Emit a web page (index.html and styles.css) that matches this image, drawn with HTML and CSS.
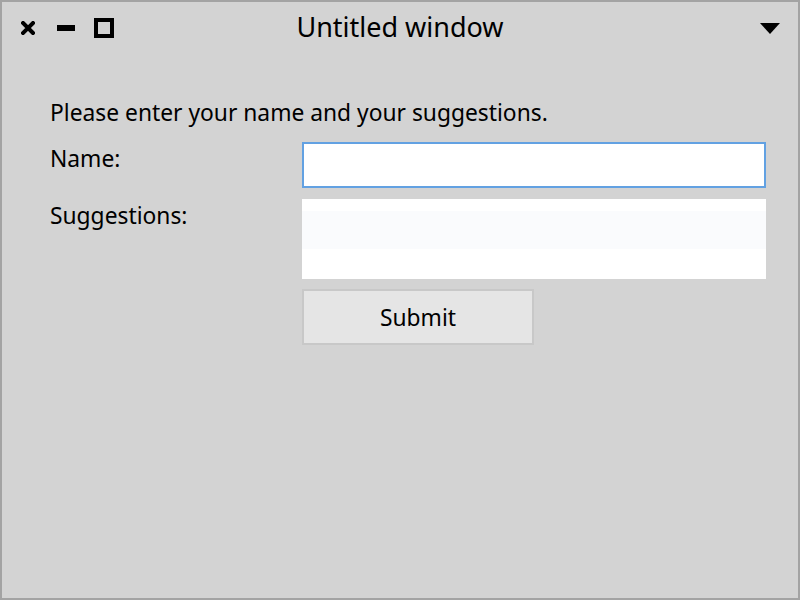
FILE: index.html
```html
<!DOCTYPE html>
<html>
<head>
<meta charset="utf-8">
<link rel="stylesheet" href="styles.css">
</head>
<body>
<div class="window">
  <div class="titlebar">
    <div class="controls">
      <svg class="ic-close" width="14" height="14" viewBox="0 0 14 14"><path d="M2 2 L12 12 M12 2 L2 12" stroke="#000" stroke-width="4" stroke-linecap="square"/></svg>
      <span class="ic-min"></span>
      <span class="ic-max"></span>
    </div>
    <div class="title">Untitled window</div>
    <svg class="ic-menu" width="20" height="12" viewBox="0 0 20 12"><polygon points="0,0 20,0 10,11" fill="#000"/></svg>
  </div>
  <div class="content">
    <p class="intro">Please enter your name and your suggestions.</p>
    <div class="form">
      <label class="label">Name:</label>
      <input class="field name-field" type="text">
      <label class="label">Suggestions:</label>
      <div class="field area-field"><div class="area-stripe"></div></div>
      <div></div>
      <button class="submit">Submit</button>
    </div>
  </div>
</div>
</body>
</html>
```

FILE: styles.css
```css
html, body {
  margin: 0;
  padding: 0;
}
body {
  width: 800px;
  height: 600px;
  font-family: "Noto Sans", "DejaVu Sans", sans-serif;
  color: #000;
}
.window {
  box-sizing: border-box;
  width: 800px;
  height: 600px;
  background: #d3d3d3;
  border: 2px solid #a3a3a3;
}
.titlebar {
  position: relative;
  height: 52px;
  display: flex;
  align-items: center;
}
.controls {
  display: flex;
  align-items: center;
  padding-left: 19px;
}
.ic-close {
  display: block;
}
.ic-min {
  display: block;
  width: 18px;
  height: 6px;
  background: #000;
  margin-left: 22px;
}
.ic-max {
  display: block;
  box-sizing: border-box;
  width: 20px;
  height: 20px;
  border: 4px solid #000;
  margin-left: 19px;
}
.title {
  position: absolute;
  left: 0;
  right: 0;
  top: 7px;
  text-align: center;
  font-size: 27px;
  line-height: 36px;
  pointer-events: none;
}
.ic-menu {
  margin-left: auto;
  margin-right: 18px;
  display: block;
  margin-top: 2px;
}
.content {
  padding: 44px 32px 0 48px;
}
.intro {
  margin: 0 0 14px 0;
  font-size: 22.8px;
  line-height: 30px;
}
.form {
  display: grid;
  grid-template-columns: 252px 464px;
  row-gap: 10px;
}
.label {
  font-size: 22.8px;
  line-height: 30px;
  padding-top: 2px;
}
.field {
  box-sizing: border-box;
  display: block;
  width: 464px;
  margin: 0;
  background: #fff;
}
.name-field {
  height: 46px;
  border: 2px solid #62a1e2;
  outline: none;
  font: inherit;
  margin-bottom: 1px;
}
.area-field {
  height: 80px;
  padding-top: 12px;
}
.area-stripe {
  height: 38px;
  background: #fafbfd;
}
.submit {
  box-sizing: border-box;
  width: 232px;
  height: 56px;
  margin: 0;
  background: #e5e5e5;
  border: 2px solid #c8c8c8;
  font-family: "Noto Sans", "DejaVu Sans", sans-serif;
  font-size: 22.8px;
  color: #000;
  padding: 0;
}
```
